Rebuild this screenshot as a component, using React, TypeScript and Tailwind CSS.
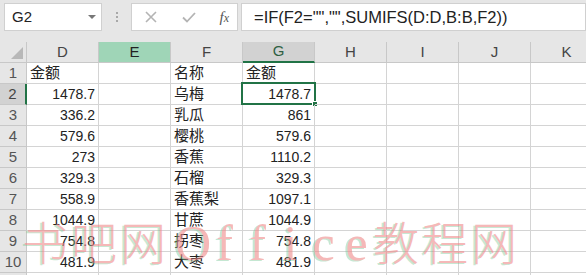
const cols = ['D', 'E', 'F', 'G', 'H', 'I', 'J', 'K']

const data: [string, string, string][] = [
  ['金额', '名称', '金额'],
  ['1478.7', '乌梅', '1478.7'],
  ['336.2', '乳瓜', '861'],
  ['579.6', '樱桃', '579.6'],
  ['273', '香蕉', '1110.2'],
  ['329.3', '石榴', '329.3'],
  ['558.9', '香蕉梨', '1097.1'],
  ['1044.9', '甘蔗', '1044.9'],
  ['754.8', '拐枣', '754.8'],
  ['481.9', '大枣', '481.9'],
  ['', '', ''],
]

const sans = "font-['Liberation_Sans','Noto_Sans_CJK_SC',sans-serif]"

function Cell({ col, value, row }: { col: string; value: string; row: number }) {
  const isNum = value !== '' && !isNaN(Number(value))
  const active = col === 'G' && row === 2
  return (
    <div
      className={`relative w-[72px] shrink-0 border-r border-b border-[#d4d4d4] flex items-center ${
        isNum ? 'justify-end pr-[3px] text-[14px]' : 'justify-start pl-[3px] text-[15px]'
      } text-[#222]`}
    >
      {value}
      {active && (
        <div className="absolute -left-[2px] -top-[2px] w-[75px] h-[23px] border-2 border-[#217346] pointer-events-none">
          <div className="absolute -right-[4px] -bottom-[4px] w-[6px] h-[6px] bg-[#217346] border border-white" />
        </div>
      )}
    </div>
  )
}

export default function App() {
  return (
    <div className={`relative w-[586px] h-[275px] overflow-hidden bg-white ${sans}`}>
      {/* formula bar */}
      <div className="h-[42px] bg-[#e6e6e6] flex items-start pt-[3px] pl-[4px]">
        <div className="w-[101px] h-[28px] bg-white border border-[#d0d0d0] flex items-center justify-between pl-[7px] pr-[5px]">
          <span className="text-[15px] text-[#222]">G2</span>
          <span className="w-0 h-0 border-l-[4px] border-r-[4px] border-t-[4px] border-l-transparent border-r-transparent border-t-[#777]" />
        </div>
        <div className="w-[31px] h-[28px] flex flex-col items-center justify-center gap-[2px]">
          <span className="w-[2px] h-[2px] bg-[#a8a8a8]" />
          <span className="w-[2px] h-[2px] bg-[#a8a8a8]" />
          <span className="w-[2px] h-[2px] bg-[#a8a8a8]" />
        </div>
        <div className="w-[110px] h-[28px] bg-white border border-[#d0d0d0] flex items-center pl-[12px] pr-[8px] justify-between">
          <svg width="14" height="14" viewBox="0 0 14 14" fill="none" stroke="#b4b4b4" strokeWidth="1.6">
            <path d="M2 2l10 10M12 2L2 12" />
          </svg>
          <svg width="16" height="14" viewBox="0 0 16 14" fill="none" stroke="#b4b4b4" strokeWidth="1.8">
            <path d="M2 7.5l4 4L14 3" />
          </svg>
          <span className="font-['Liberation_Serif',serif] italic text-[15px] text-[#555] leading-none">
            f<span className="text-[12px]">x</span>
          </span>
        </div>
        <div className="ml-[3px] w-[345px] shrink-0 h-[28px] bg-white border border-[#d0d0d0] flex items-center pl-[12px] text-[16.5px] text-[#222] whitespace-nowrap">
          =IF(F2="","",SUMIFS(D:D,B:B,F2))
        </div>
      </div>

      {/* column headers */}
      <div className="flex h-[21px] bg-[#e6e6e6] text-[15px] text-[#444]">
        <div className="relative w-[27px] shrink-0 border-r border-b border-[#c8c8c8]">
          <svg className="absolute right-[3px] bottom-[3px]" width="12" height="12" viewBox="0 0 12 12">
            <path d="M12 0V12H0Z" fill="#b8b8b8" />
          </svg>
        </div>
        {cols.map(c => (
          <div
            key={c}
            className={`w-[72px] shrink-0 flex items-center justify-center border-r border-[#c8c8c8] ${
              c === 'E'
                ? 'bg-[#9fd5b7] border-b text-[#222]'
                : c === 'G'
                ? 'bg-[#d2d2d2] border-b-2 border-b-[#217346] text-[#2f5f42]'
                : 'border-b'
            }`}
          >
            {c}
          </div>
        ))}
      </div>

      {/* rows */}
      {data.map((r, i) => {
        const row = i + 1
        const values: Record<string, string> = { D: r[0], F: r[1], G: r[2] }
        return (
          <div key={row} className="flex h-[21px]">
            <div
              className={`w-[27px] shrink-0 flex items-center justify-center text-[15px] border-b border-[#c8c8c8] ${
                row === 2
                  ? 'bg-[#d2d2d2] border-r-2 border-r-[#217346] text-[#444]'
                  : 'bg-[#e6e6e6] border-r text-[#555]'
              }`}
            >
              {row}
            </div>
            {cols.map(c => (
              <Cell key={c} col={c} value={values[c] ?? ''} row={row} />
            ))}
          </div>
        )
      })}

      {/* watermark */}
      <div className="absolute left-[22px] top-[206px] flex items-baseline pointer-events-none opacity-60 text-[#f08a8a] [text-shadow:-2px_1px_0_rgba(120,200,150,0.7)] whitespace-nowrap">
        <span className="font-['Noto_Sans_CJK_SC',serif] text-[46px] tracking-[3px] font-light">书吧网</span>
        <span className="flex ml-[6px] font-['Liberation_Serif',serif] text-[50px]">
          {'Office'.split('').map((ch, k) => (
            <span key={k} className="w-[33px] text-center">{ch}</span>
          ))}
        </span>
        <span className="font-['Noto_Sans_CJK_SC',serif] text-[46px] tracking-[3px] font-light">教程网</span>
      </div>
    </div>
  )
}
